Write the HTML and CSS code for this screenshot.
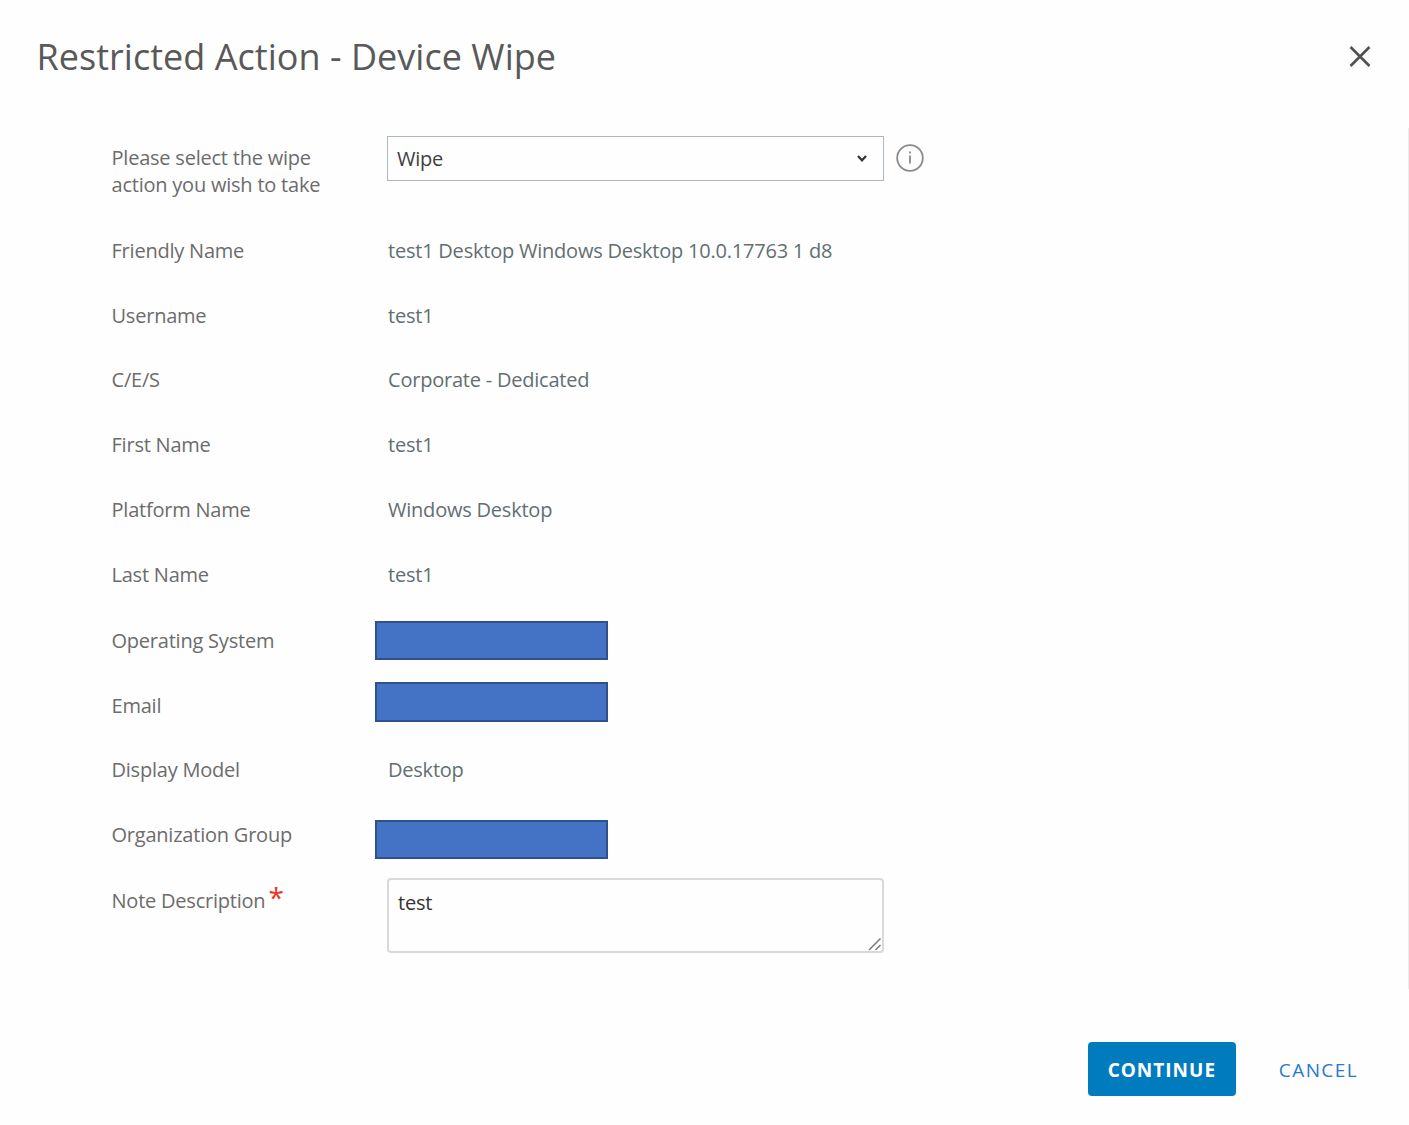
FILE: index.html
```html
<!DOCTYPE html>
<html lang="en">
<head>
<meta charset="utf-8">
<title>Restricted Action - Device Wipe</title>
<link rel="stylesheet" href="styles.css">
</head>
<body>
<div class="dialog">
  <header class="header">
    <h1 class="title">Restricted Action - Device Wipe</h1>
    <button class="close" aria-label="Close"><svg width="24" height="24" viewBox="0 0 24 24"><path d="M2.5 2 21.5 21M21.5 2 2.5 21"/></svg></button>
  </header>
  <main class="body">
    <div class="row row-action">
      <div class="label">Please select the wipe<br>action you wish to take</div>
      <div class="control">
        <div class="select"><span>Wipe</span><svg class="chevron" width="12" height="10" viewBox="0 0 12 10"><path d="M2 2 6 6.3 10 2"/></svg></div>
        <svg class="info" width="28" height="28" viewBox="0 0 28 28"><circle cx="14" cy="14" r="12.8"/><path d="M14 11.5V19.5M14 7.6V9.4"/></svg>
      </div>
    </div>
    <div class="row"><div class="label">Friendly Name</div><div class="value">test1 Desktop Windows Desktop 10.0.17763 1 d8</div></div>
    <div class="row"><div class="label">Username</div><div class="value">test1</div></div>
    <div class="row"><div class="label">C/E/S</div><div class="value">Corporate - Dedicated</div></div>
    <div class="row"><div class="label">First Name</div><div class="value">test1</div></div>
    <div class="row"><div class="label">Platform Name</div><div class="value">Windows Desktop</div></div>
    <div class="row row-last"><div class="label">Last Name</div><div class="value">test1</div></div>
    <div class="row"><div class="label">Operating System</div><div class="redacted"></div></div>
    <div class="row"><div class="label">Email</div><div class="redacted redacted-email"></div></div>
    <div class="row"><div class="label">Display Model</div><div class="value">Desktop</div></div>
    <div class="row row-group"><div class="label">Organization Group</div><div class="redacted redacted-group"></div></div>
    <div class="row row-note">
      <div class="label">Note Description<span class="required">*</span></div>
      <div class="note"><span>test</span><svg class="grip" width="14" height="14" viewBox="0 0 14 14"><path d="M1 13 12.5 1.5M7.5 13 12.5 8"/></svg></div>
    </div>
  </main>
  <footer class="footer">
    <button class="continue">CONTINUE</button>
    <button class="cancel">CANCEL</button>
  </footer>
</div>
</body>
</html>
```
FILE: styles.css
```css
* { box-sizing: border-box; }
body { margin: 0; background: #fefefe; font-family: "Open Sans", "Noto Sans", sans-serif; font-size: 20px; line-height: 27px; letter-spacing: -0.22px; color: #6c6c6c; }
button { border: 0; background: none; padding: 0; font: inherit; }
svg { fill: none; flex: none; }
.dialog { width: 1409px; height: 1125px; display: flex; flex-direction: column; overflow: hidden; }
.header { height: 128px; padding: 32px 37px 0 36.5px; display: flex; justify-content: space-between; align-items: flex-start; }
.title { margin: 1px 0 0; font-size: 36px; font-weight: 400; line-height: 48px; letter-spacing: 0.03px; color: #595959; white-space: nowrap; }
.close { width: 24px; height: 24px; margin-top: 13px; }
.close svg { display: block; stroke: #505050; stroke-width: 2.6; }
.body { height: 861px; padding: 8px 0 0 111.5px; border-right: 1px solid #ececec; }
.row { height: 64.8px; display: grid; grid-template-columns: 276.5px 1fr; align-items: center; white-space: nowrap; }
.row-action { height: 82px; align-items: start; }
.row-action .label { padding-top: 7.5px; }
.row-last { height: 66px; }
.row-group { height: 65px; }
.row-note { height: 85px; align-items: start; padding-top: 20px; }
.value { color: #636e72; }
.control { display: flex; align-items: center; gap: 12px; margin-left: -1px; }
.select { width: 497px; height: 45px; padding: 0 15px 0 9px; border: 1px solid #adb8be; display: flex; align-items: center; justify-content: space-between; color: #404040; }
.chevron { stroke: #333; stroke-width: 2.2; }
.info { stroke: #8a8a8a; stroke-width: 1.8; margin-bottom: 1px; }
.redacted { width: 233px; height: 39px; margin-left: -13px; background: #4472c4; border: 2px solid #2f528f; }
.redacted-email { height: 40px; margin-top: -7px; }
.redacted-group { margin-top: 9px; }
.required { color: #e8351c; font-size: 28px; line-height: 20px; margin-left: 3px; }
.note { width: 497px; height: 75px; margin: -9px 0 0 -1px; padding: 9px 0 0 9px; border: 2px solid #d9d9d9; border-radius: 4px; display: flex; justify-content: space-between; color: #333; }
.grip { align-self: flex-end; stroke: #777; stroke-width: 1.5; }
.footer { padding: 53px 51px 0 0; display: flex; justify-content: flex-end; align-items: center; gap: 43px; }
.continue { width: 148px; height: 54px; padding-top: 2px; border-radius: 4px; background: #007cbe; color: #fff; font-weight: 700; font-size: 19px; letter-spacing: 1px; }
.cancel { padding-top: 2px; color: #2878d0; font-size: 19px; font-weight: 500; letter-spacing: 1.4px; }
```
